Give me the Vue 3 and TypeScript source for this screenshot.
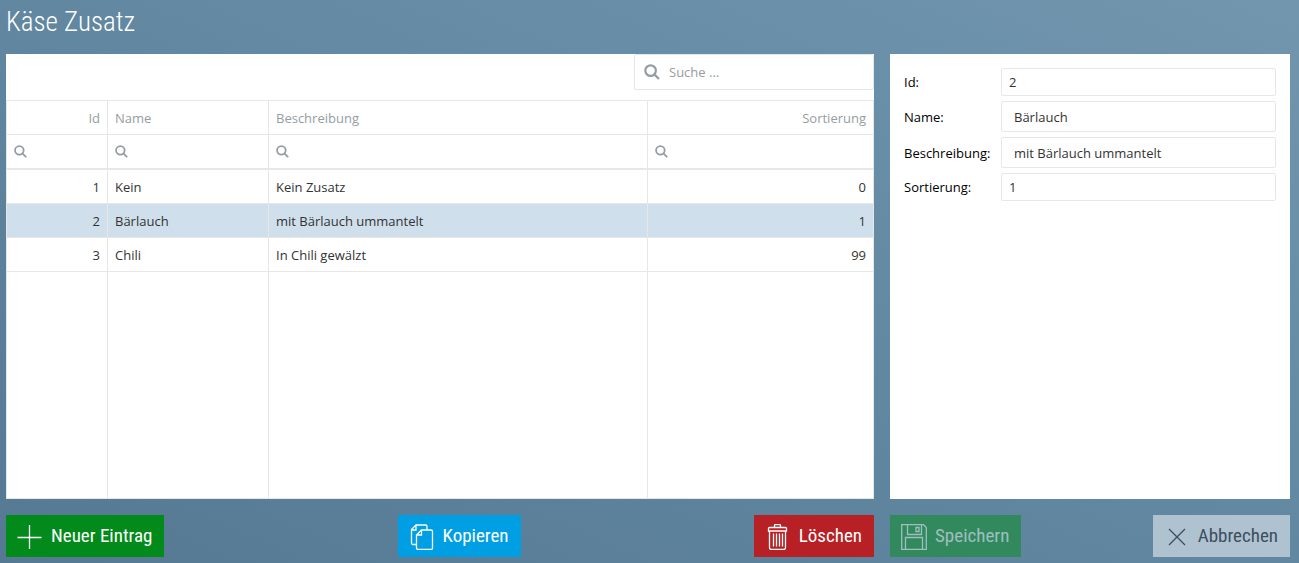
<script setup lang="ts">
import { computed, ref } from 'vue'

interface Entry {
  id: number
  name: string
  description: string
  sort: number
}

const entries: Entry[] = [
  { id: 1, name: 'Kein', description: 'Kein Zusatz', sort: 0 },
  { id: 2, name: 'Bärlauch', description: 'mit Bärlauch ummantelt', sort: 1 },
  { id: 3, name: 'Chili', description: 'In Chili gewälzt', sort: 99 },
]

const columns = [
  { key: 'id', label: 'Id', numeric: true },
  { key: 'name', label: 'Name', numeric: false },
  { key: 'description', label: 'Beschreibung', numeric: false },
  { key: 'sort', label: 'Sortierung', numeric: true },
]

const selectedId = ref(2)
const selected = computed(() => entries.find((e) => e.id === selectedId.value) ?? entries[0])
</script>

<template>
  <main class="page">
    <h1 class="title">Käse Zusatz</h1>

    <section class="panel list">
      <div class="toolbar">
        <label class="search">
          <svg class="search-icon" viewBox="0 0 16 16" aria-hidden="true">
            <circle cx="6.6" cy="6.6" r="5.3" />
            <path d="M10.6 10.6L15 15" />
          </svg>
          <input type="text" placeholder="Suche ..." aria-label="Suche" />
        </label>
      </div>

      <table class="grid">
        <colgroup>
          <col class="col-id" />
          <col class="col-name" />
          <col class="col-description" />
          <col class="col-sort" />
        </colgroup>
        <thead>
          <tr class="head">
            <th v-for="c in columns" :key="c.key" scope="col" :class="{ numeric: c.numeric }">{{ c.label }}</th>
          </tr>
          <tr class="filter">
            <td v-for="c in columns" :key="c.key">
              <label class="filter-cell">
                <svg class="filter-icon" viewBox="0 0 16 16" aria-hidden="true">
                  <circle cx="6.6" cy="6.6" r="5.3" />
                  <path d="M10.6 10.6L15 15" />
                </svg>
                <input type="text" :aria-label="c.label" />
              </label>
            </td>
          </tr>
        </thead>
        <tbody>
          <tr
            v-for="e in entries"
            :key="e.id"
            class="entry"
            :class="{ selected: e.id === selectedId }"
            @click="selectedId = e.id"
          >
            <td class="numeric">{{ e.id }}</td>
            <td>{{ e.name }}</td>
            <td>{{ e.description }}</td>
            <td class="numeric">{{ e.sort }}</td>
          </tr>
          <tr class="filler" aria-hidden="true">
            <td v-for="c in columns" :key="c.key"></td>
          </tr>
        </tbody>
      </table>
    </section>

    <form class="panel detail" @submit.prevent>
      <label for="f-id">Id:</label>
      <input id="f-id" type="text" :value="selected.id" />
      <label for="f-name">Name:</label>
      <input id="f-name" class="roomy" type="text" :value="selected.name" />
      <label for="f-description">Beschreibung:</label>
      <input id="f-description" class="roomy" type="text" :value="selected.description" />
      <label for="f-sort">Sortierung:</label>
      <input id="f-sort" type="text" :value="selected.sort" />
    </form>

    <div class="actions">
      <button type="button" class="btn add">
        <svg viewBox="0 0 26 26" aria-hidden="true"><path d="M12.500 1v24M.5 13.500h24" /></svg>
        Neuer Eintrag
      </button>
      <button type="button" class="btn copy">
        <svg viewBox="0 0 26 26" aria-hidden="true">
          <path d="M7 20.500H4a1.500 1.500 0 0 1-1.500-1.500V5.500l4.500-4.500H16.500a1.500 1.500 0 0 1 1.500 1.500V6M2.500 6H7V1" />
          <path d="M12.500 6H22a1.500 1.500 0 0 1 1.500 1.500V24a1.500 1.500 0 0 1-1.500 1.500H9a1.500 1.500 0 0 1-1.500-1.500V11zM7.500 11H12.500V6" />
        </svg>
        Kopieren
      </button>
      <button type="button" class="btn delete">
        <svg viewBox="0 0 26 26" aria-hidden="true">
          <path d="M4.500 3.500h16a1 1 0 0 1 1 1v2.500h-18V4.500a1 1 0 0 1 1-1zM9.500 3.500V1.500a1 1 0 0 1 1-1h4a1 1 0 0 1 1 1v2" />
          <path d="M4.500 7v16.500a2 2 0 0 0 2 2h12a2 2 0 0 0 2-2V7M8.500 9.500v13M11.500 9.500v13M14.500 9.500v13M17.500 9.500v13" />
        </svg>
        Löschen
      </button>
    </div>

    <div class="actions">
      <button type="button" class="btn save" disabled>
        <svg viewBox="0 0 26 26" aria-hidden="true">
          <path d="M.7.7h21.800l2.800 2.800V25.300H.7z" />
          <path d="M6.500.7v9.800h14V.7M15 3.500h3v4h-3zM4.500 25.300V13.500h17v11.800" />
        </svg>
        Speichern
      </button>
      <button type="button" class="btn cancel" disabled>
        <svg viewBox="0 0 26 26" aria-hidden="true"><path d="M5 5l16 16M21 5L5 21" /></svg>
        Abbrechen
      </button>
    </div>
  </main>
</template>

<style>
body {
  margin: 0;
}
</style>

<style scoped>
.page {
  box-sizing: border-box;
  min-height: 100vh;
  display: grid;
  grid-template-columns: minmax(0, 1fr) 400px;
  grid-template-rows: 38px 1fr 42px;
  gap: 16px;
  padding: 0 9px 6px 6px;
  background: linear-gradient(24deg, #557992 0%, #6287a1 50%, #7196ae 100%);
  font-family: "Open Sans", "Noto Sans", sans-serif;
  font-size: 13px;
  line-height: 18px;
  color: #333;
}

.title {
  grid-column: 1 / -1;
  margin: 0;
  padding-top: 6px;
  font-family: "Roboto Condensed", "Liberation Sans Narrow", Roboto, sans-serif;
  font-size: 27px;
  line-height: 32px;
  font-weight: 300;
  color: #fff;
}

.panel {
  background: #fff;
}

.list {
  display: grid;
  grid-template-rows: 46px 1fr;
}

.toolbar {
  display: flex;
  justify-content: flex-end;
  align-items: flex-start;
}

.search {
  box-sizing: border-box;
  display: flex;
  align-items: center;
  gap: 9px;
  width: 240px;
  height: 36px;
  padding: 0 9px;
  border: 1px solid #e7e7e7;
  border-radius: 2px;
}

.search-icon,
.filter-icon {
  flex: none;
  fill: none;
  stroke: #959da3;
  stroke-width: 2.2;
}

.search-icon {
  width: 16px;
  height: 16px;
}

.filter-icon {
  width: 13px;
  height: 13px;
}

input {
  box-sizing: border-box;
  min-width: 0;
  width: 100%;
  margin: 0;
  padding: 0;
  border: 0;
  outline: 0;
  background: transparent;
  font: inherit;
  color: #333;
}

input::placeholder {
  color: #969ca2;
  opacity: 1;
}

.grid {
  width: 100%;
  height: 100%;
  table-layout: fixed;
  border-collapse: separate;
  border-spacing: 0;
  border-left: 1px solid #e7e7e7;
}

.col-id {
  width: 101px;
}

.col-name {
  width: 161px;
}

.col-sort {
  width: 226px;
}

th,
td {
  box-sizing: border-box;
  padding: 0 7px;
  border-right: 1px solid #e7e7e7;
  border-bottom: 1px solid #e7e7e7;
  font-weight: 400;
  text-align: left;
  vertical-align: middle;
}

.numeric {
  text-align: right;
}

.head th {
  height: 35px;
  border-top: 1px solid #e7e7e7;
  color: #959da3;
}

.filter td {
  height: 35px;
  border-bottom-width: 2px;
}

.filter-cell {
  display: flex;
  align-items: center;
  gap: 6px;
}

.entry td {
  height: 34px;
}

.selected td {
  background: #d0dfec;
}

.detail {
  display: grid;
  grid-template-columns: 92px minmax(0, 1fr);
  align-content: start;
  align-items: center;
  gap: 5px;
  padding: 14px;
}

.detail label {
  color: #000;
}

.detail input {
  height: 28px;
  padding: 0 7px;
  border: 1px solid #e7e7e7;
  border-radius: 2px;
}

.detail input.roomy {
  height: 31px;
  padding: 0 12px;
}

.actions {
  display: flex;
  justify-content: space-between;
}

.btn {
  display: flex;
  align-items: center;
  gap: 8px;
  padding: 0 12px 0 11px;
  border: 0;
  font-family: "Roboto Condensed", "Liberation Sans Narrow", Roboto, sans-serif;
  font-size: 19px;
  line-height: 24px;
  color: #fff;
}

.btn svg {
  flex: none;
  width: 26px;
  height: 26px;
  margin-top: 2px;
  fill: none;
  stroke: currentColor;
  stroke-width: 1.3;
}

.add {
  background: #028a1b;
}

.copy {
  background: #009fe3;
}

.delete {
  background: #b72025;
}

.save {
  background: #32895e;
  color: #9ebfc0;
}

.cancel {
  background: #afc2d0;
  color: #3b4f60;
}
</style>
